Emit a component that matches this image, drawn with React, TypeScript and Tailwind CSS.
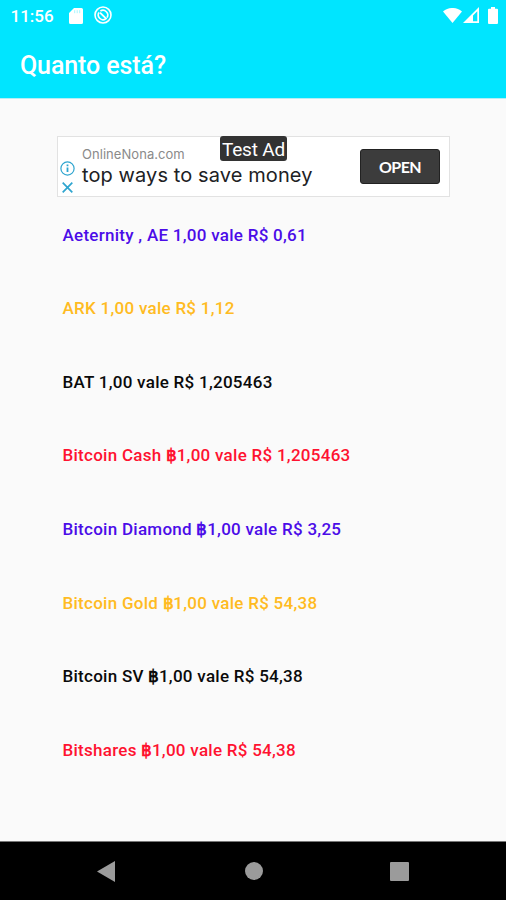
import React from 'react';

interface Quote {
  id: number;
  name: string;
  baht?: boolean;
  price: string;
  color: string;
}

const quotes: Quote[] = [
  { id: 1, name: 'Aeternity , AE', price: '0,61', color: 'text-[#4b0ce8]' },
  { id: 2, name: 'ARK', price: '1,12', color: 'text-[#ffbb22]' },
  { id: 3, name: 'BAT', price: '1,205463', color: 'text-[#0a0a0a]' },
  { id: 4, name: 'Bitcoin Cash', baht: true, price: '1,205463', color: 'text-[#ff1230]' },
  { id: 5, name: 'Bitcoin Diamond', baht: true, price: '3,25', color: 'text-[#4b0ce8]' },
  { id: 6, name: 'Bitcoin Gold', baht: true, price: '54,38', color: 'text-[#ffbb22]' },
  { id: 7, name: 'Bitcoin SV', baht: true, price: '54,38', color: 'text-[#0a0a0a]' },
  { id: 8, name: 'Bitshares', baht: true, price: '54,38', color: 'text-[#ff1230]' },
];

const StatusBar: React.FC = () => {
  return (
    <div className="h-8 flex items-center pl-[10.5px] pr-[8px] text-white">
      <span className="text-[17px] leading-8 font-medium w-[58.5px]">11:56</span>
      <svg className="w-[14px] h-[16px] -mt-px" viewBox="0 0 14 16" fill="none">
        <path d="M5 0h7.5A1.5 1.5 0 0 1 14 1.5v13a1.5 1.5 0 0 1-1.5 1.5h-11A1.5 1.5 0 0 1 0 14.5V5z" fill="currentColor" />
        <path d="M5.7 2.2v3M8.2 2.2v3M10.7 2.2v3" stroke="#00e5ff" strokeOpacity=".35" />
      </svg>
      <svg className="w-[18px] h-[18px] ml-[11px] -mt-[2px]" viewBox="0 0 18 18" fill="none" stroke="currentColor">
        <circle cx="9" cy="9" r="8" strokeWidth="1.6" />
        <path d="M5 6.4a4.8 4.8 0 0 0 6.6 6.6M6.4 5a4.8 4.8 0 0 1 6.6 6.6" strokeWidth="1.6" />
        <path d="M6 6.6l6.6 6.6" strokeWidth="1.8" />
      </svg>
      <div className="ml-auto flex items-center -mt-[2px]">
        <svg className="w-[19px] h-[15px]" viewBox="0 0 19 15" fill="currentColor">
          <path d="M9.5 15L0 3.5C5.5-1.2 13.5-1.2 19 3.5z" />
        </svg>
        <svg className="w-[16px] h-[16px] ml-px" viewBox="0 0 16 16" fill="currentColor">
          <path fillRule="evenodd" d="M16 0v16H0zM14.3 4.2L10 8.5v5.8h4.3z" />
        </svg>
        <svg className="w-[10px] h-[17px] ml-[9px]" viewBox="0 0 10 17" fill="currentColor">
          <path d="M3 0h4v1.8h2a1 1 0 0 1 1 1V16a1 1 0 0 1-1 1H1a1 1 0 0 1-1-1V2.8a1 1 0 0 1 1-1h2z" />
        </svg>
      </div>
    </div>
  );
};

const AdBanner: React.FC = () => {
  return (
    <div className="relative mt-[37px] ml-[57px] w-[393px] h-[61px] bg-white border border-[#e2e2e2] flex">
      <div className="w-[24px] pt-[24px] flex flex-col items-start pl-[2px] text-[#2fa5cf]">
        <svg className="w-[15px] h-[15px]" viewBox="0 0 15 15" fill="none" stroke="currentColor">
          <circle cx="7.5" cy="7.5" r="6.6" strokeWidth="1.2" />
          <path d="M7.5 6.5V11M7.5 3.6v1.7" strokeWidth="1.8" />
        </svg>
        <svg className="w-[11px] h-[11px] mt-[6px] ml-[2px]" viewBox="0 0 11 11" fill="none" stroke="currentColor" strokeWidth="1.7">
          <path d="M.7.7l9.6 9.6M10.3.7L.7 10.3" />
        </svg>
      </div>
      <div className="pt-[9px] whitespace-nowrap font-['Inter',sans-serif]">
        <p className="text-[13px] leading-4 tracking-[0.05px] text-[#8a8a8a]">OnlineNona.com</p>
        <p className="text-[20px] leading-[26px] tracking-[0.1px] text-[#202124]">top ways to save money</p>
      </div>
      <span className="absolute left-[162px] -top-px w-[67px] h-[25px] rounded-[3px] bg-[#333] text-white text-[19px] leading-[27px] tracking-[-0.2px] text-center whitespace-nowrap">
        Test Ad
      </span>
      <button className="absolute left-[302px] top-[12px] w-[80px] h-[35px] rounded-[3px] bg-[#3c3c3c] border border-[#222] text-white text-[16px] leading-[32px] tracking-[-0.6px] font-bold font-['Lato',sans-serif]">
        OPEN
      </button>
    </div>
  );
};

const NavBar: React.FC = () => {
  return (
    <div className="mt-auto h-[59px] bg-black border-t border-[#777] text-[#9b9b9b] flex items-center pl-[97px]">
      <svg className="w-[18px] h-[21px]" viewBox="0 0 18 21" fill="currentColor">
        <path d="M18 0v21L0 10.5z" />
      </svg>
      <div className="w-[18px] h-[18px] rounded-full bg-[#9b9b9b] ml-[130px]" />
      <div className="w-[19px] h-[19px] rounded-[1px] bg-[#9b9b9b] ml-[127px]" />
    </div>
  );
};

const App: React.FC = () => {
  return (
    <div className="w-[506px] h-[900px] bg-[#fafafa] flex flex-col overflow-hidden font-['Roboto',sans-serif]">
      <header className="h-[99px] shrink-0 bg-[#00e5ff] border-b border-[#b5eef5]">
        <StatusBar />
        <h1 className="pl-[20px] pt-[18px] text-[25px] leading-8 tracking-[-0.1px] font-medium text-white">Quanto está?</h1>
      </header>
      <AdBanner />
      <ul className="mt-[1.5px] pl-[62.5px]">
        {quotes.map((quote) => (
          <li key={quote.id} className={`h-[73.6px] flex items-center text-[17px] tracking-[0.27px] font-medium whitespace-nowrap ${quote.color}`}>
            <span>
              {quote.name} {quote.baht && <span className="font-bold leading-none font-['Liberation_Sans','Noto_Sans',sans-serif] text-[17px] tracking-[-0.3px]">฿</span>}1,00 vale R$ {quote.price}
            </span>
          </li>
        ))}
      </ul>
      <NavBar />
    </div>
  );
};

export default App;
